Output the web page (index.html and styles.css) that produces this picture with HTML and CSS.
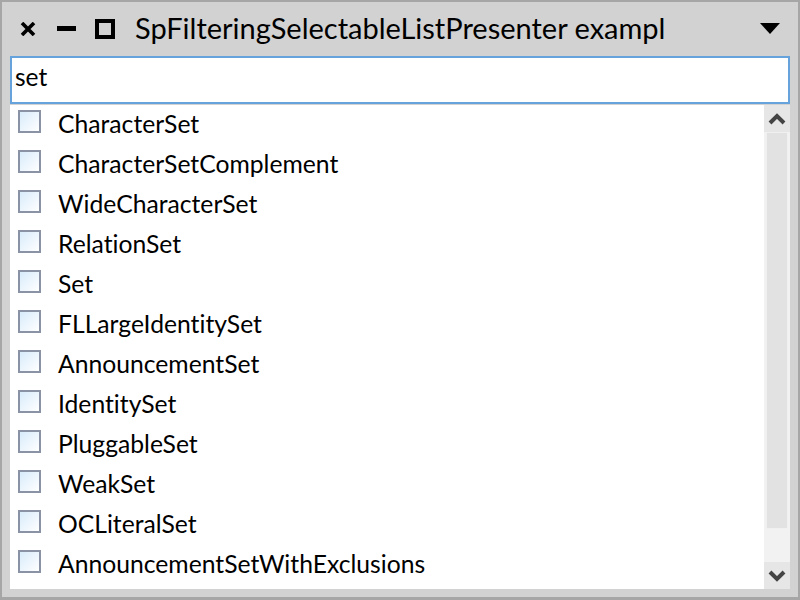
FILE: index.html
```html
<!DOCTYPE html>
<html>
<head>
<meta charset="utf-8">
<link rel="stylesheet" href="styles.css">
</head>
<body>
<div class="window">
  <div class="titlebar">
    <span class="tb-icon close"><svg width="16" height="14" viewBox="0 0 16 14"><path d="M2 1 L14 13 M14 1 L2 13" stroke="#000" stroke-width="3.6"/></svg></span>
    <span class="tb-icon min"><svg width="19" height="6" viewBox="0 0 19 6"><rect x="0" y="0" width="19" height="5" fill="#000"/></svg></span>
    <span class="tb-icon max"><svg width="20" height="20" viewBox="0 0 20 20"><rect x="2" y="2" width="16" height="16" fill="none" stroke="#000" stroke-width="4"/></svg></span>
    <span class="title">SpFilteringSelectableListPresenter exampl</span>
    <span class="menu"><svg width="20" height="12" viewBox="0 0 20 12"><path d="M0 0 H20 L10 11 Z" fill="#000"/></svg></span>
  </div>
  <div class="search"><span class="search-text">set</span></div>
  <div class="listwrap">
    <div class="list">
      <div class="row"><span class="cb"></span><span class="label">CharacterSet</span></div>
      <div class="row"><span class="cb"></span><span class="label">CharacterSetComplement</span></div>
      <div class="row"><span class="cb"></span><span class="label">WideCharacterSet</span></div>
      <div class="row"><span class="cb"></span><span class="label">RelationSet</span></div>
      <div class="row"><span class="cb"></span><span class="label">Set</span></div>
      <div class="row"><span class="cb"></span><span class="label">FLLargeIdentitySet</span></div>
      <div class="row"><span class="cb"></span><span class="label">AnnouncementSet</span></div>
      <div class="row"><span class="cb"></span><span class="label">IdentitySet</span></div>
      <div class="row"><span class="cb"></span><span class="label">PluggableSet</span></div>
      <div class="row"><span class="cb"></span><span class="label">WeakSet</span></div>
      <div class="row"><span class="cb"></span><span class="label">OCLiteralSet</span></div>
      <div class="row"><span class="cb"></span><span class="label">AnnouncementSetWithExclusions</span></div>
    </div>
    <div class="scrollbar">
      <div class="sb-btn"><svg width="18" height="12" viewBox="0 0 18 12"><path d="M2 10 L9 3 L16 10" fill="none" stroke="#444" stroke-width="4"/></svg></div>
      <div class="sb-track"><div class="sb-thumb"></div></div>
      <div class="sb-btn"><svg width="18" height="12" viewBox="0 0 18 12"><path d="M2 2 L9 9 L16 2" fill="none" stroke="#444" stroke-width="4"/></svg></div>
    </div>
  </div>
</div>
</body>
</html>
```

FILE: styles.css
```css
html, body {
  margin: 0;
  padding: 0;
  width: 800px;
  height: 600px;
  overflow: hidden;
  background: #a6a6a6;
}
.window {
  box-sizing: border-box;
  width: 800px;
  height: 600px;
  border-top: 2px solid #a6a6a6;
  border-left: 2px solid #a6a6a6;
  border-right: 2px solid #a6a6a6;
  border-bottom: 3px solid #a6a6a6;
  background: #d2d2d2;
  padding: 0 8px 8px 8px;
  display: flex;
  flex-direction: column;
  font-family: "Lato", "Noto Sans", sans-serif;
  font-variant-ligatures: none;
  color: #000;
}
.titlebar {
  height: 54px;
  display: flex;
  align-items: center;
  flex-shrink: 0;
}
.tb-icon {
  display: flex;
  align-items: center;
}
.close { margin-left: 10px; }
.min { margin-left: 21px; }
.max { margin-left: 19px; }
.title {
  margin-left: 20px;
  font-size: 29px;
  padding-bottom: 3px;
  flex: 1;
  white-space: nowrap;
  overflow: hidden;
}
.menu { margin-right: 10px; display: flex; align-items: center; }
.search {
  box-sizing: border-box;
  height: 48px;
  border: 2px solid #66a3dc;
  background: #fff;
  display: flex;
  align-items: center;
  padding-left: 3px;
  padding-bottom: 8px;
  flex-shrink: 0;
}
.search-text { font-size: 24.5px; }
.listwrap {
  flex: 1;
  display: flex;
  background: #fff;
  margin-top: 1px;
}
.list {
  flex: 1;
  padding-top: 1px;
}
.row {
  height: 40px;
  display: flex;
  align-items: center;
}
.cb {
  box-sizing: border-box;
  width: 23px;
  height: 23px;
  margin-left: 8px;
  margin-bottom: 10px;
  border: 2px solid #8a93a6;
  background: linear-gradient(135deg, #d8ecfb 0%, #ffffff 100%);
}
.label {
  margin-left: 17px;
  font-size: 24.7px;
  padding-bottom: 5px;
}
.scrollbar {
  width: 26px;
  display: flex;
  flex-direction: column;
  background: #f2f2f2;
}
.sb-btn {
  height: 27px;
  background: #e6e6e6;
  display: flex;
  align-items: center;
  justify-content: center;
}
.sb-track {
  flex: 1;
  padding: 0 2px;
}
.sb-thumb {
  height: 395px;
  background: #e2e2e2;
  border: 1px solid #f0f0f0;
}
```
